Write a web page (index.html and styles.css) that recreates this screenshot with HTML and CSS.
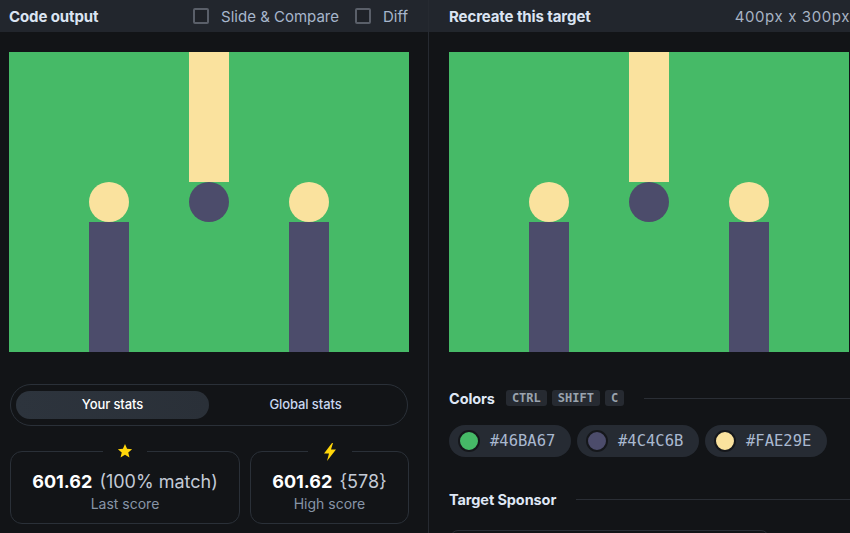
FILE: index.html
```html
<!DOCTYPE html>
<html>
<head>
<meta charset="utf-8">
<link rel="stylesheet" href="styles.css">
</head>
<body>
<div class="app">
  <section class="panel left">
    <header class="bar">
      <span class="title">Code output</span>
      <div class="opts">
        <label class="opt"><span class="box"></span>Slide &amp; Compare</label>
        <label class="opt"><span class="box"></span>Diff</label>
      </div>
    </header>
    <div class="body left-body">
      <div class="canvas">
        <div class="tall"></div>
        <div class="c c1"></div>
        <div class="c c2"></div>
        <div class="c c3"></div>
        <div class="bar1"></div>
        <div class="bar2"></div>
      </div>
      <div class="tabs">
        <div class="tab active">Your stats</div>
        <div class="tab">Global stats</div>
      </div>
      <div class="cards">
        <div class="card wide">
          <svg class="icon" width="16" height="16" viewBox="0 0 24 24"><path fill="#FFD60A" d="M12 1.5l3.1 7.2 7.6.6-5.8 5 1.8 7.5L12 17.8l-6.7 4 1.8-7.5-5.8-5 7.6-.6z"/></svg>
          <div class="score"><b>601.62</b> <span>(100% match)</span></div>
          <div class="label">Last score</div>
        </div>
        <div class="card narrow">
          <svg class="icon" width="16" height="18" viewBox="0 0 16 18"><path fill="#FFD60A" d="M10 0L2 10.5h5L5 18l9-11.5H9L11 0z"/></svg>
          <div class="score"><b>601.62</b> <span>{578}</span></div>
          <div class="label">High score</div>
        </div>
      </div>
    </div>
  </section>
  <section class="panel right">
    <header class="bar">
      <span class="title">Recreate this target</span>
      <span class="dims">400px x 300px</span>
    </header>
    <div class="body right-body">
      <div class="canvas">
        <div class="tall"></div>
        <div class="c c1"></div>
        <div class="c c2"></div>
        <div class="c c3"></div>
        <div class="bar1"></div>
        <div class="bar2"></div>
      </div>
      <div class="heading colors-head">
        <span class="htext">Colors</span>
        <kbd>CTRL</kbd><kbd>SHIFT</kbd><kbd>C</kbd>
        <span class="rule"></span>
      </div>
      <div class="swatches">
        <div class="swatch"><span class="dot green"></span>#46BA67</div>
        <div class="swatch"><span class="dot purple"></span>#4C4C6B</div>
        <div class="swatch"><span class="dot yellow"></span>#FAE29E</div>
      </div>
      <div class="heading sponsor-head">
        <span class="htext">Target Sponsor</span>
        <span class="rule"></span>
      </div>
      <div class="sponsor"></div>
    </div>
  </section>
</div>
</body>
</html>
```
FILE: styles.css
```css
* { box-sizing: border-box; }
html, body { margin: 0; padding: 0; }
body {
  width: 850px;
  height: 533px;
  overflow: hidden;
  background: #121417;
  font-family: "Inter", "Liberation Sans", sans-serif;
  color: #dfe6f0;
}
.app { display: flex; height: 533px; }
.panel { display: flex; flex-direction: column; overflow: hidden; }
.left { width: 429px; border-right: 1px solid #262a31; flex-shrink: 0; }
.right { flex: 1; min-width: 0; }
.bar {
  height: 32px;
  background: #22262d;
  display: flex;
  align-items: center;
  justify-content: space-between;
  flex-shrink: 0;
}
.left .bar { padding: 0 20px 0 9px; }
.right .bar { padding: 0 0 0 20px; }
.title { font-weight: 700; font-size: 15px; letter-spacing: -0.1px; color: #dbe4f2; }
.opts { display: flex; gap: 16px; }
.opt {
  display: flex; align-items: center; gap: 12px;
  font-size: 15px; color: #a7b6cc; letter-spacing: 0;
}
.box {
  width: 16px; height: 16px;
  border: 2px solid #5a5f69; border-radius: 2px;
  background: #1f2228;
}
.dims { font-size: 15px; color: #a7b3c4; white-space: nowrap; letter-spacing: 0.6px; }
.body { display: flex; flex-direction: column; }
.left-body { padding: 20px 0 0 9px; }
.right-body { padding: 20px 0 0 20px; }
.canvas {
  position: relative;
  width: 400px; height: 300px;
  background: #46BA67;
  flex-shrink: 0;
  overflow: hidden;
}
.canvas > div { position: absolute; }
.tall { left: 180px; top: 0; width: 40px; height: 130px; background: #FAE29E; }
.c { top: 130px; width: 40px; height: 40px; border-radius: 50%; }
.c1 { left: 80px; background: #FAE29E; }
.c2 { left: 180px; background: #4C4C6B; }
.c3 { left: 280px; background: #FAE29E; }
.bar1, .bar2 { top: 170px; width: 40px; height: 130px; background: #4C4C6B; }
.bar1 { left: 80px; }
.bar2 { left: 280px; }

.tabs {
  margin: 32px 0 0 1px;
  width: 398px; height: 42px;
  border: 1.5px solid #2a3038;
  border-radius: 21px;
  display: flex; align-items: center;
  padding: 0 5px;
}
.tab {
  flex: 1; height: 28px;
  display: flex; align-items: center; justify-content: center;
  padding-bottom: 3px;
  font-size: 13px; font-weight: 500; color: #c9d7f0; letter-spacing: -0.1px;
}
.tab.active {
  background: linear-gradient(90deg, #2d343d, #2a3038);
  border-radius: 14px;
  color: #ffffff;
}
.cards { display: flex; gap: 10px; margin: 25px 0 0 1px; }
.card {
  position: relative;
  height: 73px;
  border: 1.5px solid #2a3038;
  border-radius: 12px;
  display: flex; flex-direction: column; align-items: center;
  padding-top: 19px;
}
.wide { width: 230px; }
.narrow { width: 159px; }
.icon {
  position: absolute; top: -9px; left: 50%;
  transform: translateX(-50%);
  box-sizing: content-box;
  padding: 0 14px;
  background: #121417;
}
.score { font-size: 18px; white-space: nowrap; letter-spacing: 0; }
.score b { color: #ffffff; font-weight: 700; }
.score span { color: #c3cad6; font-weight: 400; margin-left: 2px; }
.label { margin-top: 3px; font-size: 14px; color: #8794a7; }

.heading { display: flex; align-items: center; }
.htext { font-weight: 700; font-size: 14.5px; color: #dfe7f5; letter-spacing: -0.1px; }
.colors-head { margin-top: 37px; height: 18px; }
kbd {
  font-family: "DejaVu Sans Mono", monospace;
  font-size: 12px; font-weight: 700;
  color: #9aa3ae;
  background: #262a31;
  border-radius: 3px;
  padding: 1px 6px;
  margin-left: 5px;
  line-height: 14px;
}
kbd:first-of-type { margin-left: 11px; }
.rule { flex: 1; height: 1px; background: #2a2e35; margin-left: 20px; }
.swatches { display: flex; gap: 6px; margin-top: 18px; }
.swatch {
  display: flex; align-items: center;
  height: 32px; width: 122px;
  padding-left: 9px;
  background: #262b33;
  border-radius: 16px;
  font-family: "DejaVu Sans Mono", monospace;
  font-size: 15.5px;
  color: #a9b8cf;
  white-space: nowrap;
}
.dot {
  width: 22px; height: 22px; border-radius: 50%;
  border: 2px solid #15171b;
  margin-right: 10px;
}
.green { background: #46BA67; }
.purple { background: #4C4C6B; }
.yellow { background: #FAE29E; }
.sponsor-head { margin-top: 33px; height: 18px; }
.sponsor {
  margin-top: 22px; margin-left: 1px;
  width: 319px; height: 40px;
  border: 1px solid #2a2e35;
  border-radius: 8px;
}
```
